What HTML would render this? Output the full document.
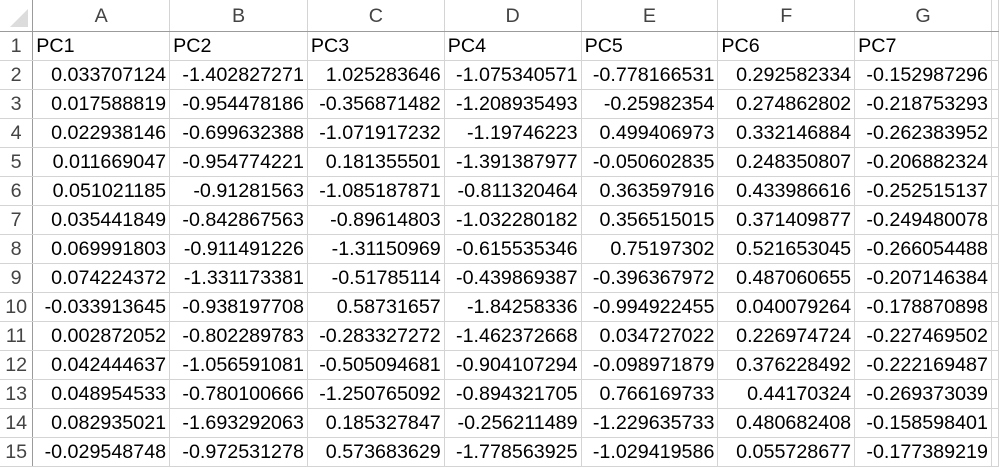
<!DOCTYPE html>
<html><head><style>
body{margin:0;background:#fff;width:999px;height:468px;overflow:hidden;font-family:"Liberation Sans",sans-serif;}
table{border-collapse:collapse;table-layout:fixed;position:absolute;left:0;top:0;}
td{border:1px solid #d4d4d4;height:28px;padding:0 3px;font-size:19.7px;color:#000;white-space:nowrap;overflow:hidden;text-align:right;line-height:28px;}
tr.h td{height:31px;text-align:center;color:#444;border-bottom:1px solid #9b9b9b;border-top:none;}
td.r{text-align:center;color:#444;border-right:1px solid #9b9b9b;border-left:none;padding:0;}
td.l{text-align:left;}
</style></head><body>
<table>
<colgroup><col style="width:33px"><col style="width:137px"><col style="width:138px"><col style="width:137px"><col style="width:137px"><col style="width:137px"><col style="width:137px"><col style="width:137px"><col style="width:6px"></colgroup>
<tr class="h"><td class="r" style="position:relative"><svg width="22" height="22" style="position:absolute;right:2px;bottom:2px"><polygon points="20,2 20,20 2,20" fill="#dcdcdc"/></svg></td><td>A</td><td>B</td><td>C</td><td>D</td><td>E</td><td>F</td><td>G</td><td></td></tr>
<tr><td class="r">1</td><td class="l">PC1</td><td class="l">PC2</td><td class="l">PC3</td><td class="l">PC4</td><td class="l">PC5</td><td class="l">PC6</td><td class="l">PC7</td><td></td></tr>
<tr><td class="r">2</td><td>0.033707124</td><td>-1.402827271</td><td>1.025283646</td><td>-1.075340571</td><td>-0.778166531</td><td>0.292582334</td><td>-0.152987296</td><td></td></tr>
<tr><td class="r">3</td><td>0.017588819</td><td>-0.954478186</td><td>-0.356871482</td><td>-1.208935493</td><td>-0.25982354</td><td>0.274862802</td><td>-0.218753293</td><td></td></tr>
<tr><td class="r">4</td><td>0.022938146</td><td>-0.699632388</td><td>-1.071917232</td><td>-1.19746223</td><td>0.499406973</td><td>0.332146884</td><td>-0.262383952</td><td></td></tr>
<tr><td class="r">5</td><td>0.011669047</td><td>-0.954774221</td><td>0.181355501</td><td>-1.391387977</td><td>-0.050602835</td><td>0.248350807</td><td>-0.206882324</td><td></td></tr>
<tr><td class="r">6</td><td>0.051021185</td><td>-0.91281563</td><td>-1.085187871</td><td>-0.811320464</td><td>0.363597916</td><td>0.433986616</td><td>-0.252515137</td><td></td></tr>
<tr><td class="r">7</td><td>0.035441849</td><td>-0.842867563</td><td>-0.89614803</td><td>-1.032280182</td><td>0.356515015</td><td>0.371409877</td><td>-0.249480078</td><td></td></tr>
<tr><td class="r">8</td><td>0.069991803</td><td>-0.911491226</td><td>-1.31150969</td><td>-0.615535346</td><td>0.75197302</td><td>0.521653045</td><td>-0.266054488</td><td></td></tr>
<tr><td class="r">9</td><td>0.074224372</td><td>-1.331173381</td><td>-0.51785114</td><td>-0.439869387</td><td>-0.396367972</td><td>0.487060655</td><td>-0.207146384</td><td></td></tr>
<tr><td class="r">10</td><td>-0.033913645</td><td>-0.938197708</td><td>0.58731657</td><td>-1.84258336</td><td>-0.994922455</td><td>0.040079264</td><td>-0.178870898</td><td></td></tr>
<tr><td class="r">11</td><td>0.002872052</td><td>-0.802289783</td><td>-0.283327272</td><td>-1.462372668</td><td>0.034727022</td><td>0.226974724</td><td>-0.227469502</td><td></td></tr>
<tr><td class="r">12</td><td>0.042444637</td><td>-1.056591081</td><td>-0.505094681</td><td>-0.904107294</td><td>-0.098971879</td><td>0.376228492</td><td>-0.222169487</td><td></td></tr>
<tr><td class="r">13</td><td>0.048954533</td><td>-0.780100666</td><td>-1.250765092</td><td>-0.894321705</td><td>0.766169733</td><td>0.44170324</td><td>-0.269373039</td><td></td></tr>
<tr><td class="r">14</td><td>0.082935021</td><td>-1.693292063</td><td>0.185327847</td><td>-0.256211489</td><td>-1.229635733</td><td>0.480682408</td><td>-0.158598401</td><td></td></tr>
<tr><td class="r">15</td><td>-0.029548748</td><td>-0.972531278</td><td>0.573683629</td><td>-1.778563925</td><td>-1.029419586</td><td>0.055728677</td><td>-0.177389219</td><td></td></tr>
</table>
</body></html>
